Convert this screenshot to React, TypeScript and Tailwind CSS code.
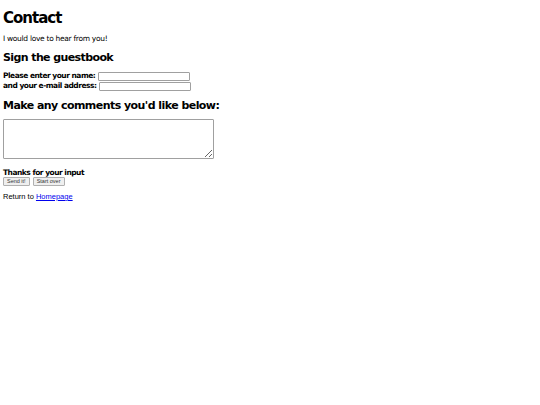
export default function App() {
  return (
    <div className="bg-white text-black px-[3px] pt-[10px]" style={{ fontFamily: '"DejaVu Sans", sans-serif' }}>
      <h1 className="text-[15px] font-bold leading-[17px] tracking-[-1px]">Contact</h1>
      <p className="text-[7.5px] leading-[10px] mt-[7px] tracking-[-0.3px]">I would love to hear from you!</p>
      <h2 className="text-[11px] font-bold leading-[14px] mt-[7px] tracking-[-0.6px]">Sign the guestbook</h2>
      <div className="mt-[6px] text-[7.5px] font-bold leading-[10px] tracking-[-0.5px]">
        <div className="flex items-center">
          <span>Please enter your name:</span>
          <input className="ml-[2.5px] w-[92px] h-[9px] border border-[#a0a0a0] rounded-[1px]" />
        </div>
        <div className="flex items-center">
          <span>and your e-mail address:</span>
          <input className="ml-[2.5px] w-[92px] h-[9px] border border-[#a0a0a0] rounded-[1px]" />
        </div>
      </div>
      <h2 className="text-[11px] font-bold leading-[14px] mt-[8px] tracking-[-0.55px]">Make any comments you'd like below:</h2>
      <textarea className="block mt-[6px] w-[211px] h-[40px] border border-[#a0a0a0] rounded-[1px]" />
      <div className="mt-[9px] text-[7.5px] font-bold leading-[9px] tracking-[-0.5px]">Thanks for your input</div>
      <div className="flex gap-[3px]" style={{ fontFamily: '"Liberation Sans", Arial, sans-serif' }}>
        <button className="text-[5.5px] px-[3px] h-[9px] leading-[7px] border border-[#b0b0b0] bg-[#efefef] rounded-[1px] text-[#333]">Send it!</button>
        <button className="text-[5.5px] px-[3px] h-[9px] leading-[7px] border border-[#b0b0b0] bg-[#efefef] rounded-[1px] text-[#333]">Start over</button>
      </div>
      <p className="mt-[6px] text-[7.5px] leading-[10px]" style={{ fontFamily: '"Liberation Sans", Arial, sans-serif' }}>
        Return to <a href="#" className="text-[#0000ee] underline">Homepage</a>
      </p>
    </div>
  );
}
